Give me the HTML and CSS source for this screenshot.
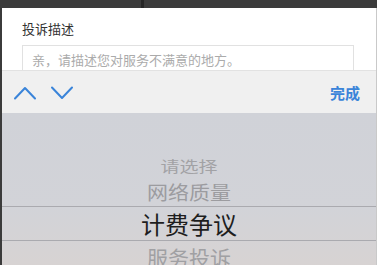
FILE: index.html
```html
<!DOCTYPE html>
<html lang="zh-CN">
  <head>
    <meta charset="UTF-8" />
    <meta name="viewport" content="width=device-width, initial-scale=1.0" />
    <title>投诉描述</title>
    <link rel="stylesheet" href="styles.css">
  </head>
  <body>
    <!-- Dark strip of the page behind the sheet -->
    <div class="topbar">
      <div class="topbar-left"></div>
      <div class="topbar-divider"></div>
    </div>

    <div class="page">
      <!-- Complaint form -->
      <div class="form-panel">
        <div class="form-label">投诉描述</div>
        <div class="form-input">亲，请描述您对服务不满意的地方。</div>
      </div>

      <!-- Keyboard accessory toolbar -->
      <div class="toolbar">
        <div class="toolbar-arrows">
          <svg class="arrow" width="22" height="14" viewBox="0 0 22 14">
            <polyline points="1,12.5 11,2 21,12.5" />
          </svg>
          <svg class="arrow" width="22" height="14" viewBox="0 0 22 14">
            <polyline points="1,1.5 11,12 21,1.5" />
          </svg>
        </div>
        <div class="toolbar-done">完成</div>
      </div>

      <!-- Picker wheel -->
      <div class="picker">
        <div class="picker-row row-far"><span>请选择</span></div>
        <div class="picker-row row-near"><span>网络质量</span></div>
        <div class="picker-row row-selected"><span>计费争议</span></div>
        <div class="picker-row row-next"><span>服务投诉</span></div>
      </div>
    </div>
  </body>
</html>
```

FILE: styles.css
```css
/* Base */
html,
body {
  margin: 0;
  padding: 0;
}

body {
  width: 377px;
  height: 265px;
  overflow: hidden;
  background: #3b3b3b;
  font-family: "Noto Sans CJK SC", "Noto Sans", sans-serif;
}

/* Top dark strip */
.topbar {
  height: 8px;
  display: flex;
}

.topbar-left {
  width: 141px;
}

.topbar-divider {
  width: 3px;
  background: #262626;
}

/* Sheet */
.page {
  margin-left: 2px;
  width: 374px;
  border-right: 1px solid #c9c9c9;
  height: 257px;
  display: flex;
  flex-direction: column;
  overflow: hidden;
}

/* Form panel */
.form-panel {
  background: #ffffff;
  height: 62px;
  padding: 12px 22px 0 20px;
  box-sizing: border-box;
  overflow: hidden;
  flex-shrink: 0;
}

.form-label {
  font-size: 13px;
  line-height: 18px;
  color: #333;
}

.form-input {
  margin-top: 7px;
  height: 40px;
  border: 1px solid #e1e1e1;
  padding: 5px 9px;
  font-size: 13px;
  line-height: 18px;
  color: #ababab;
}

/* Toolbar */
.toolbar {
  height: 43px;
  background: #f0f0f0;
  border-top: 1px solid #e2e2e2;
  box-sizing: border-box;
  display: flex;
  align-items: center;
  justify-content: space-between;
  padding: 0 16px 0 12px;
  flex-shrink: 0;
}

.toolbar-arrows {
  display: flex;
  gap: 15px;
  margin-top: 1px;
}

.arrow polyline {
  fill: none;
  stroke: #3a84d9;
  stroke-width: 2;
  stroke-linecap: round;
  stroke-linejoin: round;
}

.toolbar-done {
  font-size: 15px;
  font-weight: bold;
  color: #3a84d9;
  margin-top: 1px;
}

/* Picker wheel */
.picker {
  flex: 1;
  padding-top: 39px;
  background: linear-gradient(#d0d2d8, #d2d3d8 60%, #d8d3d2);
  display: flex;
  flex-direction: column;
}

.picker-row {
  display: flex;
  justify-content: center;
  align-items: center;
  flex-shrink: 0;
}

.row-far {
  height: 26px;
  font-size: 19px;
  color: #a2a2a5;
}

.row-far span {
  transform: scaleY(0.75);
}

.row-near {
  height: 28px;
  font-size: 21px;
  color: #9c9ca0;
}

.row-near span {
  transform: scaleY(0.9);
}

.row-selected {
  height: 35px;
  box-sizing: border-box;
  border-top: 1px solid #aaaaaf;
  border-bottom: 1px solid #aaaaaf;
  font-size: 24px;
  color: #1e1e1e;
}

.row-next {
  height: 32px;
  font-size: 21px;
  color: #a0a0a3;
}
```
